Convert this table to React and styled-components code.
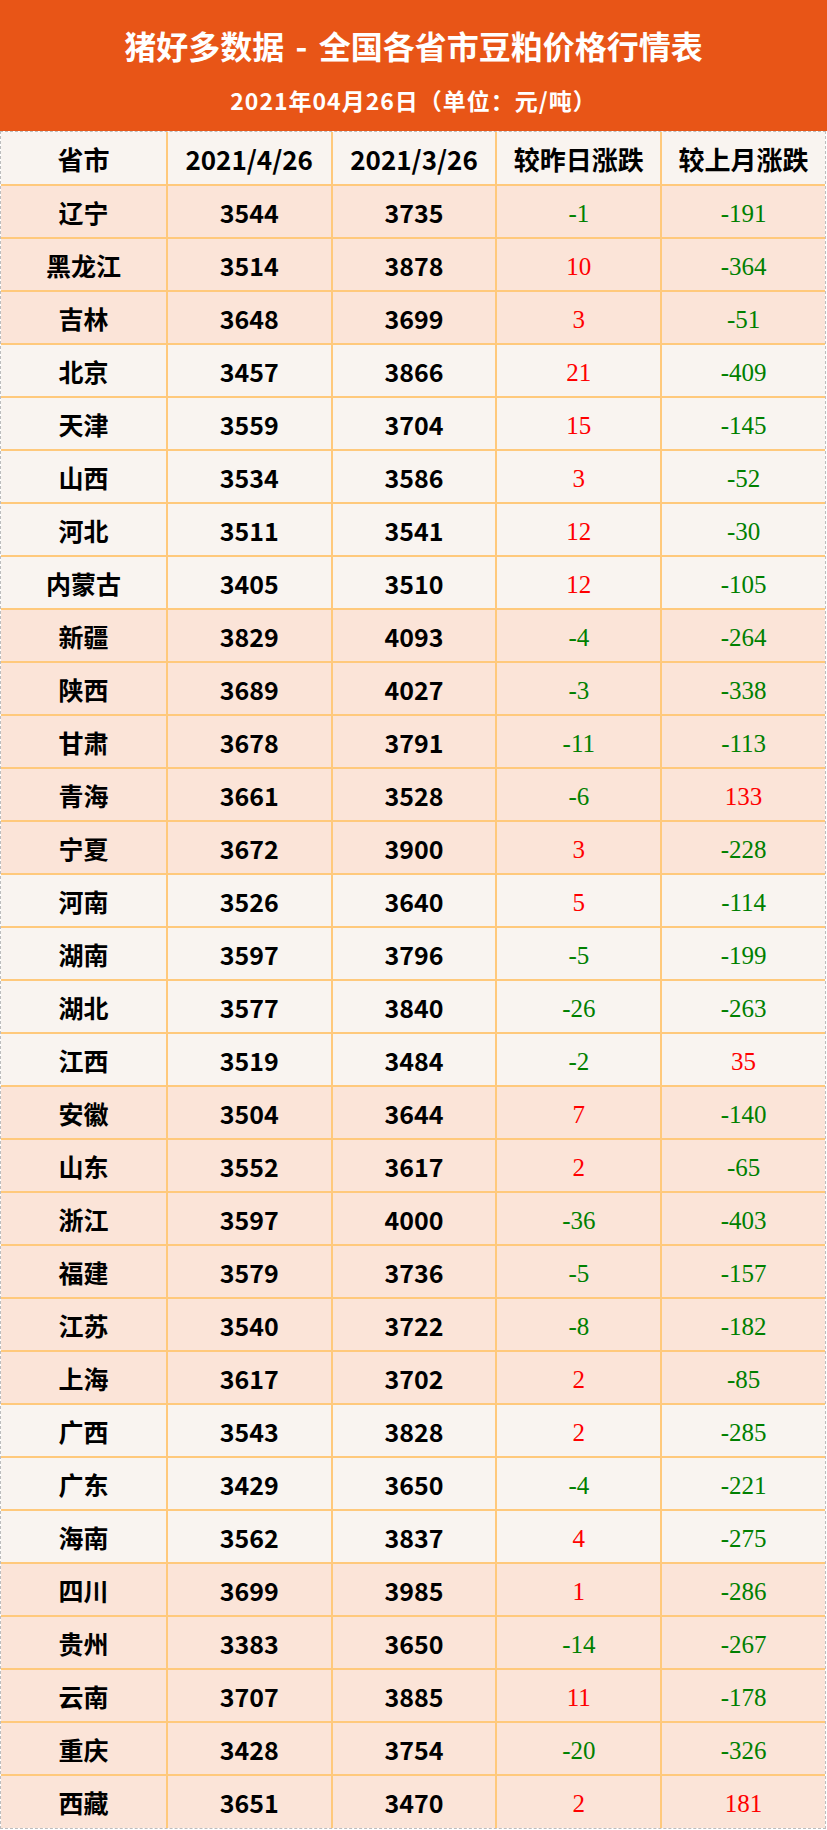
import React from "react";
import styled, { createGlobalStyle } from "styled-components";

// 数据：省市 / 本期 / 上期 / 较昨日 / 较上月，tone 表示底色分区
const rows = [
  ["辽宁", 3544, 3735, -1, -191, "pink"],
  ["黑龙江", 3514, 3878, 10, -364, "pink"],
  ["吉林", 3648, 3699, 3, -51, "pink"],
  ["北京", 3457, 3866, 21, -409, "light"],
  ["天津", 3559, 3704, 15, -145, "light"],
  ["山西", 3534, 3586, 3, -52, "light"],
  ["河北", 3511, 3541, 12, -30, "light"],
  ["内蒙古", 3405, 3510, 12, -105, "light"],
  ["新疆", 3829, 4093, -4, -264, "pink"],
  ["陕西", 3689, 4027, -3, -338, "pink"],
  ["甘肃", 3678, 3791, -11, -113, "pink"],
  ["青海", 3661, 3528, -6, 133, "pink"],
  ["宁夏", 3672, 3900, 3, -228, "pink"],
  ["河南", 3526, 3640, 5, -114, "light"],
  ["湖南", 3597, 3796, -5, -199, "light"],
  ["湖北", 3577, 3840, -26, -263, "light"],
  ["江西", 3519, 3484, -2, 35, "light"],
  ["安徽", 3504, 3644, 7, -140, "pink"],
  ["山东", 3552, 3617, 2, -65, "pink"],
  ["浙江", 3597, 4000, -36, -403, "pink"],
  ["福建", 3579, 3736, -5, -157, "pink"],
  ["江苏", 3540, 3722, -8, -182, "pink"],
  ["上海", 3617, 3702, 2, -85, "pink"],
  ["广西", 3543, 3828, 2, -285, "light"],
  ["广东", 3429, 3650, -4, -221, "light"],
  ["海南", 3562, 3837, 4, -275, "light"],
  ["四川", 3699, 3985, 1, -286, "pink"],
  ["贵州", 3383, 3650, -14, -267, "pink"],
  ["云南", 3707, 3885, 11, -178, "pink"],
  ["重庆", 3428, 3754, -20, -326, "pink"],
  ["西藏", 3651, 3470, 2, 181, "pink"],
];

const heads = ["省市", "2021/4/26", "2021/3/26", "较昨日涨跌", "较上月涨跌"];

const GlobalStyle = createGlobalStyle`
  * { box-sizing: border-box; }
  body {
    margin: 0;
    background: #ffffff;
    font-family: "Noto Sans CJK SC", "Noto Sans", sans-serif;
  }
`;

const Page = styled.div`
  width: 827px;
`;

const Banner = styled.header`
  height: 131px;
  background: #e85517;
  color: #ffffff;
  display: flex;
  flex-direction: column;
  align-items: center;
  padding-top: 27px;
  font-weight: 700;
`;

const Title = styled.h1`
  margin: 0;
  font-size: 32px;
  line-height: 36px;
  font-weight: 700;
  word-spacing: 4px;
`;

const Subtitle = styled.div`
  margin-top: 24px;
  font-size: 23px;
  line-height: 26px;
  letter-spacing: 1px;
`;

const Table = styled.div`
  width: 826px;
  border: 1px dashed #bdbdbd;
`;

const Row = styled.div`
  display: grid;
  grid-template-columns: repeat(5, 1fr);
  height: ${(p) => (p.$head ? 54 : p.$last ? 52 : 53)}px;
  background: ${(p) => (p.$tone === "pink" ? "#fbe4d8" : "#f9f4f0")};
  border-bottom: ${(p) => (p.$last ? "none" : "2px solid #ffc97c")};
`;

const Cell = styled.div`
  display: flex;
  align-items: center;
  justify-content: center;
  border-left: 2px solid #ffc97c;
  color: #000000;
  font-size: 25px;
  font-weight: 700;

  &:first-child {
    border-left: none;
  }
`;

const HeadCell = styled(Cell)`
  font-size: 26px;
`;

const Change = styled(Cell)`
  font-family: "Liberation Serif", "Times New Roman", serif;
  font-weight: 400;
  font-size: 25px;
  color: ${(p) => (p.$value < 0 ? "#008000" : "#ff0000")};
  padding-top: 4px;
`;

export default function App() {
  return (
    <Page>
      <GlobalStyle />
      <Banner>
        <Title>猪好多数据 - 全国各省市豆粕价格行情表</Title>
        <Subtitle>2021年04月26日（单位：元/吨）</Subtitle>
      </Banner>
      <Table>
        <Row $head $tone="light">
          {heads.map((h) => (
            <HeadCell key={h}>{h}</HeadCell>
          ))}
        </Row>
        {rows.map(([name, now, prev, day, month, tone], i) => (
          <Row key={name} $tone={tone} $last={i === rows.length - 1}>
            <Cell>{name}</Cell>
            <Cell>{now}</Cell>
            <Cell>{prev}</Cell>
            <Change $value={day}>{day}</Change>
            <Change $value={month}>{month}</Change>
          </Row>
        ))}
      </Table>
    </Page>
  );
}
